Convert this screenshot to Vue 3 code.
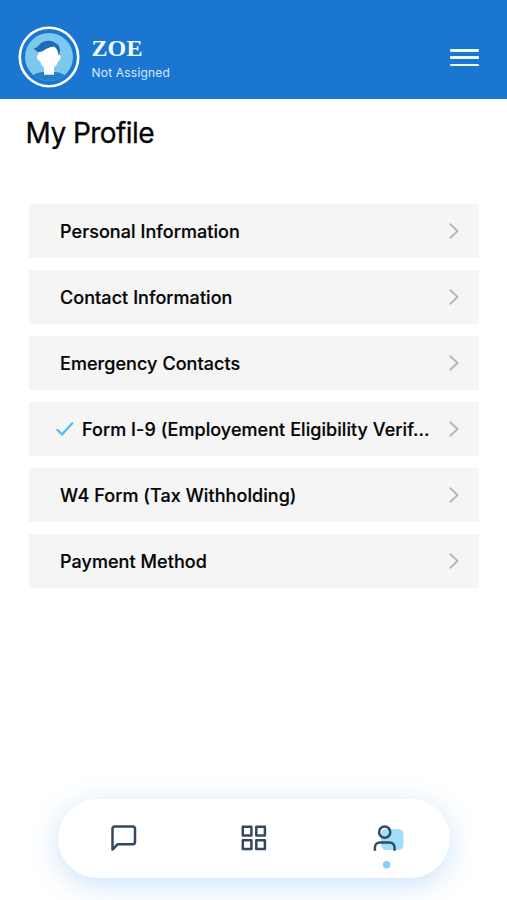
<script setup>
const rows = [
  { label: 'Personal Information' },
  { label: 'Contact Information' },
  { label: 'Emergency Contacts' },
  { label: 'Form I-9 (Employement Eligibility Verif...', done: true },
  { label: 'W4 Form (Tax Withholding)' },
  { label: 'Payment Method' },
]
</script>

<template>
  <div class="screen">
    <header class="header">
      <svg class="avatar" viewBox="0 0 62 62" aria-hidden="true">
        <defs>
          <clipPath id="face"><circle cx="31" cy="31" r="24" /></clipPath>
        </defs>
        <circle cx="31" cy="31" r="29.2" fill="#1b76d2" stroke="#fff" stroke-width="2.6" />
        <circle cx="31" cy="31" r="24" fill="#7cc8ee" />
        <g clip-path="url(#face)">
          <path d="M12 56 C13 49 18 46.500 25 46 H37 C44 46.500 49 49 50 56 Z" fill="#2680c8" />
          <path d="M26 38 H36 V48.700 H26 Z" fill="#fff" />
          <path d="M20.500 27 C24 23 27 22 31 21 C36 20 39.500 22 40.800 28.500 C43.500 29 43 34 40.500 35 C39 39 35.500 43.500 31 43.500 C26.500 43.500 23 39 22 35 C18.300 34 18 29.500 20.500 28.500 Z" fill="#fff" />
          <path d="M15.500 21.800 C18 22.500 20 20.500 22 18 C26 13.700 34 13.700 37 17 C42 18.500 43 24 41 29.500 C40 28 40 23 36.500 20.500 C32.500 20.500 29 22.500 26.500 24 C24 26 20.500 26.500 19 25.500 C17.500 24.500 16.500 23.500 15.500 21.800 Z" fill="#1b6bb8" />
        </g>
      </svg>
      <div class="identity">
        <div class="name">ZOE</div>
        <div class="status">Not Assigned</div>
      </div>
      <div class="menu"><i /><i /><i /></div>
    </header>

    <h1 class="title">My Profile</h1>

    <ul class="list">
      <li v-for="row in rows" :key="row.label" class="row" :class="{ done: row.done }">
        <svg v-if="row.done" class="check" viewBox="0 0 18 16"><path d="M1.500 9 L6 13.500 L16.200 2.200" /></svg>
        <span class="label">{{ row.label }}</span>
        <svg class="chevron" viewBox="0 0 12 18"><path d="M1.800 1.800 L9.600 9 L1.800 16.200" /></svg>
      </li>
    </ul>

    <nav class="nav">
      <svg class="icon" viewBox="0 0 28 28">
        <path d="M2.500 25.500 V4.700 A2.200 2.200 0 0 1 4.700 2.500 H22.800 A2.200 2.200 0 0 1 25 4.700 V18 A2.200 2.200 0 0 1 22.800 20.200 H7.800 Z" />
      </svg>
      <svg class="icon" viewBox="0 0 28 28">
        <path d="M2.800 2.800 H11.400 V11.400 H2.800 Z M16.300 2.800 H24.900 V11.400 H16.300 Z M2.800 16.300 H11.400 V24.900 H2.800 Z M16.300 16.300 H24.900 V24.900 H16.300 Z" />
      </svg>
      <svg class="user" viewBox="0 0 34 46">
        <rect x="10" y="5" width="22.500" height="21" rx="5" fill="#a0dffb" />
        <circle class="line" cx="13.700" cy="8.200" r="5.600" />
        <path class="line" d="M3.900 26.800 V23.500 A5 5 0 0 1 8.900 18.500 H18.600 A5 5 0 0 1 23.600 23.500 V26.800" />
        <circle cx="15.600" cy="40.700" r="3.700" fill="#7ed3f9" />
      </svg>
    </nav>
  </div>
</template>

<style>
body {
  margin: 0;
  background: #fff;
}
</style>

<style scoped>
.screen {
  box-sizing: border-box;
  display: flex;
  flex-direction: column;
  width: 507px;
  height: 900px;
  overflow: hidden;
  background: #fff;
  color: #050505;
  font-family: Inter, "Liberation Sans", sans-serif;
}
.header {
  box-sizing: border-box;
  display: flex;
  flex: none;
  height: 98.500px;
  padding: 26px 28px 0 18px;
  background: #1b76d2;
}
.avatar {
  width: 62px;
  height: 62px;
}
.identity {
  flex: 1;
  padding: 9px 0 0 11.500px;
}
.name {
  font: bold 24px/26px "Liberation Serif", serif;
  letter-spacing: 0.100px;
  color: #f2fbff;
}
.status {
  margin-top: 4px;
  font-size: 12px;
  line-height: 16px;
  letter-spacing: 0.200px;
  color: #d5ebff;
}
.menu {
  display: flex;
  flex-direction: column;
  gap: 4.700px;
  width: 29px;
  padding-top: 23px;
}
.menu i {
  height: 2.600px;
  border-radius: 1px;
  background: #e9fbff;
}
.title {
  flex: none;
  margin: 16.500px 0 0 25.500px;
  font-size: 28px;
  font-weight: 400;
  line-height: 36px;
  letter-spacing: -0.550px;
  -webkit-text-stroke: 0.300px #050505;
}
.list {
  display: flex;
  flex: none;
  flex-direction: column;
  gap: 12px;
  margin: 53px 28px 0 29px;
  padding: 0;
  list-style: none;
}
.row {
  box-sizing: border-box;
  display: flex;
  align-items: center;
  height: 54px;
  padding: 0 19px 0 31px;
  background: #f5f5f5;
}
.row.done {
  padding-left: 26.500px;
}
.label {
  flex: 1;
  padding-top: 1px;
  font-size: 18px;
  font-weight: 500;
  line-height: 24px;
  letter-spacing: 0.060px;
  white-space: nowrap;
  -webkit-text-stroke: 0.200px #050505;
}
.check {
  width: 18px;
  height: 16px;
  margin-right: 8.500px;
  fill: none;
  stroke: #56bdf2;
  stroke-width: 2.400;
  stroke-linecap: round;
  stroke-linejoin: round;
}
.chevron {
  flex: none;
  width: 12px;
  height: 18px;
  margin-bottom: 1px;
  fill: none;
  stroke: #b9b9b9;
  stroke-width: 2.100;
  stroke-linejoin: round;
}
.nav {
  box-sizing: border-box;
  display: flex;
  flex: none;
  justify-content: space-between;
  width: 392px;
  height: 79px;
  margin: auto auto 22px 58px;
  padding: 25px 45px 0 51.500px;
  border-radius: 40px;
  background: #fff;
  box-shadow: 0 6px 28px rgba(60, 150, 235, 0.280);
}
.icon {
  width: 28px;
  height: 28px;
  fill: none;
  stroke: #34495e;
  stroke-width: 2.500;
  stroke-linejoin: round;
}
.user {
  width: 34px;
  height: 46px;
}
.line {
  fill: none;
  stroke: #34495e;
  stroke-width: 2.500;
}
</style>
